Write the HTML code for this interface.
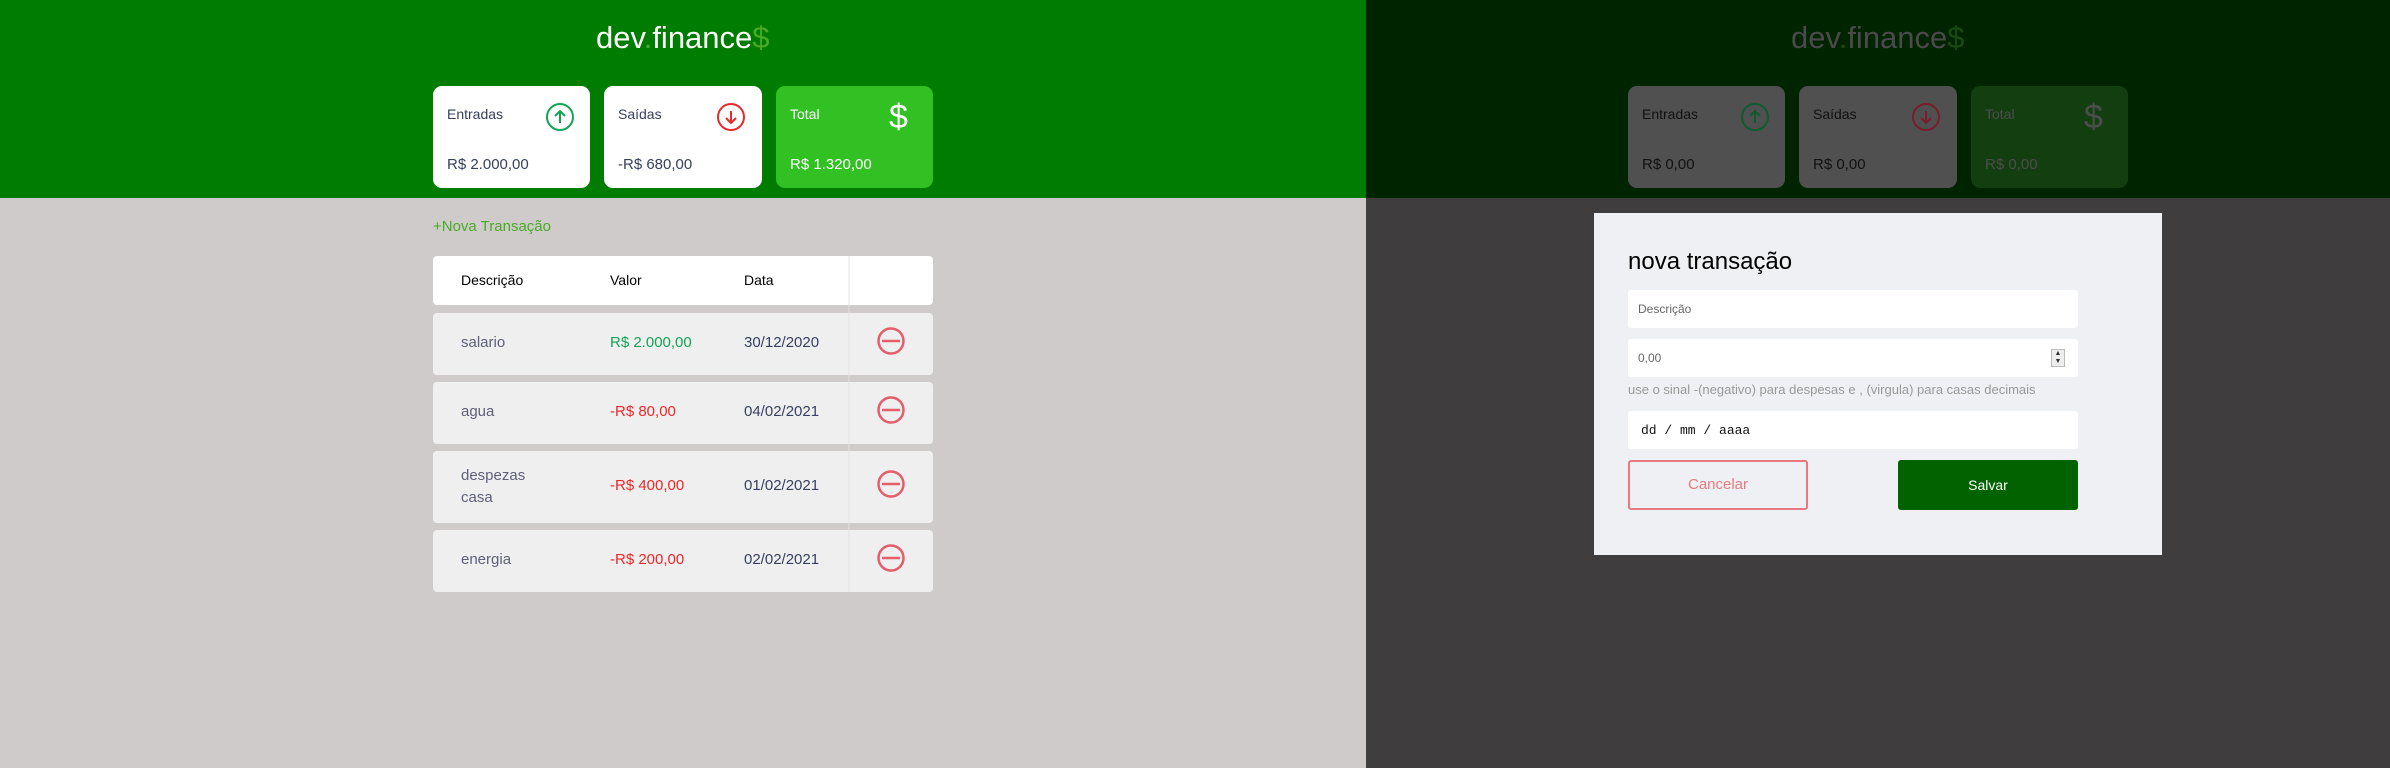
<!DOCTYPE html>
<html><head><meta charset="utf-8"><style>
*{margin:0;padding:0;box-sizing:border-box}
body{width:2390px;height:768px;position:relative;overflow:hidden;font-family:"Liberation Sans",sans-serif;background:#cfcbca}
.a{position:absolute}
.card{position:absolute;border-radius:9px;background:#fff;color:#363f5f}
.card .l{position:absolute;left:14px;top:20px;font-size:14px}
.card .v{position:absolute;left:14px;top:70px;font-size:15px}
.row{position:absolute;left:433px;width:500px;background:#f0eff0;border-radius:4px;font-size:15px}
.row span{position:absolute}
.inp{position:absolute;left:1628px;width:450px;height:38px;background:#fff;border-radius:3px}
</style></head><body>
<!-- left -->
<div class="a" style="left:0;top:0;width:1366px;height:198px;background:#007d00"></div>
<div class="a" style="left:596px;top:20px;font-size:31px;color:#fff;letter-spacing:0">dev<span style="color:#49aa26">.</span>finance<span style="color:#49aa26">$</span></div>
<div class="card" style="left:433px;top:86px;width:157px;height:102px"><div class="l">Entradas</div><div class="v">R$ 2.000,00</div>
<svg class="a" style="left:112px;top:16px" width="30" height="30" viewBox="0 0 30 30"><circle cx="15" cy="15" r="13" fill="none" stroke="#12a454" stroke-width="2"/><path d="M15 21V9M10 14l5-5 5 5" fill="none" stroke="#12a454" stroke-width="2"/></svg></div>
<div class="card" style="left:604px;top:86px;width:158px;height:102px"><div class="l">Saídas</div><div class="v">-R$ 680,00</div>
<svg class="a" style="left:112px;top:16px" width="30" height="30" viewBox="0 0 30 30"><circle cx="15" cy="15" r="13" fill="none" stroke="#e92929" stroke-width="2"/><path d="M15 9v12M10 16l5 5 5-5" fill="none" stroke="#e92929" stroke-width="2"/></svg></div>
<div class="card" style="left:776px;top:86px;width:157px;height:102px;background:#31c123;color:#fff"><div class="l">Total</div><div class="v">R$ 1.320,00</div>
<div class="a" style="left:113px;top:12px;font-size:34px;font-weight:300">$</div></div>
<div class="a" style="left:433px;top:218px;font-size:15px;color:#49aa26">+Nova Transação</div>
<div class="a" style="left:433px;top:256px;width:500px;height:49px;background:#fff;border-radius:4px;font-size:14px;color:#000">
<span class="a" style="left:28px;top:16px">Descrição</span><span class="a" style="left:177px;top:16px">Valor</span><span class="a" style="left:311px;top:16px">Data</span></div>
<div class="row" style="top:313px;height:62px"><span style="left:28px;top:21px;color:#5d6079">salario</span><span style="left:177px;top:21px;color:#12a454">R$ 2.000,00</span><span style="left:311px;top:21px;color:#363f5f">30/12/2020</span></div>
<div class="row" style="top:382px;height:62px"><span style="left:28px;top:21px;color:#5d6079">agua</span><span style="left:177px;top:21px;color:#e92929">-R$ 80,00</span><span style="left:311px;top:21px;color:#363f5f">04/02/2021</span></div>
<div class="row" style="top:451px;height:72px"><span style="left:28px;top:14px;color:#5d6079;line-height:22px">despezas<br>casa</span><span style="left:177px;top:26px;color:#e92929">-R$ 400,00</span><span style="left:311px;top:26px;color:#363f5f">01/02/2021</span></div>
<div class="row" style="top:530px;height:62px"><span style="left:28px;top:21px;color:#5d6079">energia</span><span style="left:177px;top:21px;color:#e92929">-R$ 200,00</span><span style="left:311px;top:21px;color:#363f5f">02/02/2021</span></div>
<svg class="a" style="left:0;top:0" width="1366" height="768">
<g fill="none" stroke="#e45d6b" stroke-width="2.5">
<circle cx="891" cy="341" r="12.5"/><path d="M882 341h18"/>
<circle cx="891" cy="410" r="12.5"/><path d="M882 410h18"/>
<circle cx="891" cy="484" r="12.5"/><path d="M882 484h18"/>
<circle cx="891" cy="558" r="12.5"/><path d="M882 558h18"/></g>
<path d="M849 256v336" stroke="#e4e2e2" stroke-width="1"/></svg>
<!-- right -->
<div class="a" style="left:1366px;top:0;width:1024px;height:198px;background:#002300"></div>
<div class="a" style="left:1366px;top:198px;width:1024px;height:570px;background:#3f3d3e"></div>
<div class="a" style="left:1791px;top:20px;font-size:31px;color:#4a4a4a">dev<span style="color:#1a4a12">.</span>finance<span style="color:#1a4a12">$</span></div>
<div class="card" style="left:1628px;top:86px;width:157px;height:102px;background:#505050;color:#111"><div class="l">Entradas</div><div class="v">R$ 0,00</div>
<svg class="a" style="left:112px;top:16px" width="30" height="30" viewBox="0 0 30 30"><circle cx="15" cy="15" r="13" fill="none" stroke="#0e5a31" stroke-width="2"/><path d="M15 21V9M10 14l5-5 5 5" fill="none" stroke="#0e5a31" stroke-width="2"/></svg></div>
<div class="card" style="left:1799px;top:86px;width:158px;height:102px;background:#505050;color:#111"><div class="l">Saídas</div><div class="v">R$ 0,00</div>
<svg class="a" style="left:112px;top:16px" width="30" height="30" viewBox="0 0 30 30"><circle cx="15" cy="15" r="13" fill="none" stroke="#7a1d2a" stroke-width="2"/><path d="M15 9v12M10 16l5 5 5-5" fill="none" stroke="#7a1d2a" stroke-width="2"/></svg></div>
<div class="card" style="left:1971px;top:86px;width:157px;height:102px;background:#133e0f;color:#4d4d4d"><div class="l">Total</div><div class="v">R$ 0,00</div>
<div class="a" style="left:113px;top:12px;font-size:34px;font-weight:300">$</div></div>
<div class="a" style="left:1594px;top:213px;width:568px;height:342px;background:#eff0f4"></div>
<div class="a" style="left:1628px;top:248px;font-size:24px;color:#000">nova transação</div>
<div class="inp" style="top:290px"><span class="a" style="left:10px;top:12px;font-size:12px;color:#666">Descrição</span></div>
<div class="inp" style="top:339px"><span class="a" style="left:10px;top:12px;font-size:12px;color:#666">0,00</span>
<div class="a" style="left:423px;top:10px;width:14px;height:18px;border:1px solid #bbb;background:#eee;font-size:7px;line-height:8px;text-align:center;color:#333">▲<br>▼</div></div>
<div class="a" style="left:1628px;top:382px;font-size:13px;color:#999">use o sinal -(negativo) para despesas e , (virgula) para casas decimais</div>
<div class="inp" style="top:411px"><span class="a" style="left:13px;top:12px;font-size:13px;color:#111;font-family:'Liberation Mono',monospace">dd / mm / aaaa</span></div>
<div class="a" style="left:1628px;top:460px;width:180px;height:50px;border:2px solid #e77a80;border-radius:3px;color:#e77a80;font-size:15px;text-align:center;line-height:46px">Cancelar</div>
<div class="a" style="left:1898px;top:460px;width:180px;height:50px;background:#006300;border-radius:3px;color:#fff;font-size:14px;text-align:center;line-height:50px">Salvar</div>
</body></html>
